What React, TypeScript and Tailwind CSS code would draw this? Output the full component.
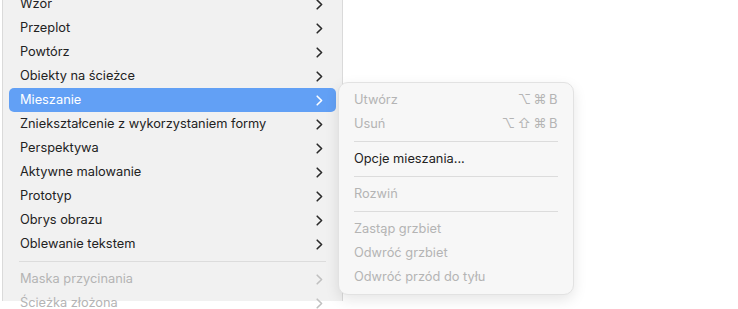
import React from "react";

type Item = { label: string; disabled?: boolean } | "sep";

const mainItems: Item[] = [
  { label: "Wzór" },
  { label: "Przeplot" },
  { label: "Powtórz" },
  { label: "Obiekty na ścieżce" },
  { label: "Mieszanie" },
  { label: "Zniekształcenie z wykorzystaniem formy" },
  { label: "Perspektywa" },
  { label: "Aktywne malowanie" },
  { label: "Prototyp" },
  { label: "Obrys obrazu" },
  { label: "Oblewanie tekstem" },
  "sep",
  { label: "Maska przycinania", disabled: true },
  { label: "Ścieżka złożona", disabled: true },
];

type SubItem = { label: string; disabled?: boolean; shortcut?: string } | "sep";

const subItems: SubItem[] = [
  { label: "Utwórz", disabled: true, shortcut: "⌥⌘B" },
  { label: "Usuń", disabled: true, shortcut: "⌥⇧⌘B" },
  "sep",
  { label: "Opcje mieszania..." },
  "sep",
  { label: "Rozwiń", disabled: true },
  "sep",
  { label: "Zastąp grzbiet", disabled: true },
  { label: "Odwróć grzbiet", disabled: true },
  { label: "Odwróć przód do tyłu", disabled: true },
];

function Chevron({ className }: { className: string }) {
  return (
    <svg width="7" height="11" viewBox="0 0 7 11" className={className}>
      <path d="M1.2 1.2 L5.6 5.5 L1.2 9.8" fill="none" stroke="currentColor" strokeWidth="1.6" strokeLinecap="round" strokeLinejoin="round" />
    </svg>
  );
}

export default function App() {
  return (
    <div className="relative w-[738px] h-[309px] overflow-hidden bg-white" style={{ fontFamily: "Inter, 'Noto Sans', sans-serif" }}>
      <div className="ml-[2px] w-[341px] h-full bg-[#f1f1f1] border-l border-r border-[#dadada]">
        <div className="-mt-[8px] px-[6px]">
          {mainItems.map((it, i) => {
            if (it === "sep")
              return <div key={i} className="h-[11px] flex items-center px-[10px]"><div className="h-px w-full bg-[#dcdcdc]" /></div>;
            const active = it.label === "Mieszanie";
            return (
              <div
                key={i}
                className={`h-[24px] flex items-center justify-between pl-[11px] pr-[13px] rounded-[5px] text-[12.8px] ${
                  active ? "bg-[#62a0f5] text-white" : it.disabled ? "text-[#b4b4b4]" : "text-[#222222]"
                }`}
              >
                <span>{it.label}</span>
                <Chevron className={active ? "text-white" : it.disabled ? "text-[#c0c0c0]" : "text-[#2a2a2a]"} />
              </div>
            );
          })}
        </div>
      </div>

      <div className="absolute left-[338px] top-[82px] w-[236px] pt-[5px] pb-[5px] px-[6px] rounded-[10px] bg-[#f7f7f7] border border-[#e2e2e2] shadow-[0_5px_14px_rgba(0,0,0,0.10)]">
        {subItems.map((it, i) => {
          if (it === "sep")
            return <div key={i} className="h-[11px] flex items-center px-[9px]"><div className="h-px w-full bg-[#dcdcdc]" /></div>;
          return (
            <div
              key={i}
              className={`h-[24px] flex items-center justify-between pl-[9px] pr-[7px] text-[12.8px] ${it.disabled ? "text-[#b4b4b4]" : "text-[#222222]"}`}
            >
              <span>{it.label}</span>
              {it.shortcut && <span className="tracking-[2.5px] text-[13px] text-[#b4b4b4]">{it.shortcut}</span>}
            </div>
          );
        })}
      </div>
    </div>
  );
}
